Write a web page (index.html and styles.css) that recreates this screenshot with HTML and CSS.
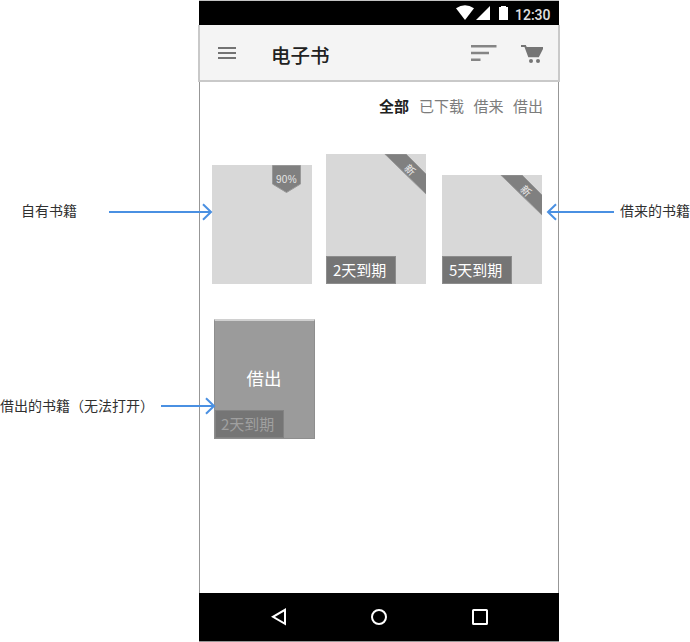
FILE: index.html
```html
<!DOCTYPE html>
<html lang="zh-CN">
<head>
<meta charset="utf-8">
<title>电子书</title>
<link rel="stylesheet" href="styles.css">
</head>
<body>
<main class="stage">
  <section class="phone">
    <div class="status">
      <svg class="signals" width="54" height="16" viewBox="0 0 54 16" fill="#fff">
        <path d="M0 3.2Q9 -2.6 18 3.2L9 15Z"/>
        <path d="M34 1V15H20Z"/>
        <path d="M43 2H45V1H50V2H52V15H43Z"/>
      </svg>
      <span class="clock">12:30</span>
    </div>
    <header class="appbar">
      <svg class="menu" width="18" height="12" viewBox="0 0 18 12" fill="#737373"><path d="M0 0H18V2H0ZM0 5H18V7H0ZM0 10H18V12H0Z"/></svg>
      <h1 class="title">电子书</h1>
      <svg class="sort" width="26" height="17" viewBox="0 0 26 17" fill="#858585"><path d="M0 0H25.5V2.6H0ZM0 6.7H18V9.3H0ZM0 13.4H9.5V16H0Z"/></svg>
      <svg class="cart" width="23" height="19" viewBox="0 0 23 19" fill="#757575"><path d="M0 0H4.8L5.7 2H22V4L17.8 12.2H7.3L3.5 2H0Z"/><circle cx="10" cy="16" r="2"/><circle cx="17" cy="16" r="2"/></svg>
    </header>
    <div class="content">
      <nav class="tabs"><span class="tab active">全部</span><span class="tab">已下载</span><span class="tab">借来</span><span class="tab">借出</span></nav>
      <div class="shelf">
        <article class="book own">
          <svg class="progress" width="29" height="29" viewBox="0 0 29 29"><path d="M.5 .5H28.5V19L14.5 27.5L.5 19Z" fill="#808080" stroke="#989898"/></svg>
          <span class="percent">90%</span>
        </article>
        <article class="book tall">
          <svg class="ribbon" width="43" height="41" viewBox="0 0 43 41"><path d="M.8 0H22L43 21V41Z" fill="#808080" stroke="#989898"/></svg>
          <span class="new">新</span>
          <span class="due">2天到期</span>
        </article>
        <article class="book short">
          <svg class="ribbon" width="43" height="41" viewBox="0 0 43 41"><path d="M.8 0H22L43 21V41Z" fill="#808080" stroke="#989898"/></svg>
          <span class="new">新</span>
          <span class="due">5天到期</span>
        </article>
      </div>
      <article class="lent"><span class="lent-label">借出</span><span class="due faded">2天到期</span></article>
    </div>
    <footer class="navbar">
      <svg width="16" height="18" viewBox="0 0 16 18" fill="none" stroke="#fff" stroke-width="2"><path d="M15 1.8V15.8L3 8.8Z"/></svg>
      <svg width="16" height="16" viewBox="0 0 16 16" fill="none" stroke="#fff" stroke-width="2"><circle cx="8" cy="8" r="7"/></svg>
      <svg width="16" height="16" viewBox="0 0 16 16" fill="none" stroke="#fff" stroke-width="2"><rect x="1" y="1" width="14" height="14" rx=".6"/></svg>
    </footer>
  </section>
  <div class="callout note-own"><span class="note">自有书籍</span><svg width="104" height="18" viewBox="0 0 104 18"><path d="M0 9H102M94 1.2L102 9L94 16.8"/></svg></div>
  <div class="callout note-borrowed"><svg width="69" height="18" viewBox="0 0 69 18"><path d="M68 9H2M10 1.2L2 9L10 16.8"/></svg><span class="note">借来的书籍</span></div>
  <div class="callout note-lent"><span class="note">借出的书籍<span class="paren">（</span>无法打开）</span><svg width="55" height="18" viewBox="0 0 55 18"><path d="M0 9H53M45 1.2L53 9L45 16.8"/></svg></div>
</main>
</body>
</html>
```
FILE: styles.css
```css
* { box-sizing: border-box; }
body {
  margin: 0;
  background: #fff;
  font-family: "Noto Sans CJK SC", sans-serif;
}
svg { display: block; flex: none; }
.stage {
  position: relative;
  width: 690px;
  height: 642px;
  overflow: hidden;
}
.phone {
  display: flex;
  flex-direction: column;
  width: 360px;
  height: 642px;
  margin-left: 199px;
  border-top: 1px solid #c4c4c4;
  border-bottom: 1px solid #979797;
}
.status {
  display: flex;
  justify-content: flex-end;
  height: 24px;
  padding-right: 8px;
  background: #000;
}
.signals { margin: 4px 5px 0 0; }
.clock {
  width: 36px;
  padding-top: 1px;
  color: #e0e0e0;
  font: 500 14px/26px Roboto, sans-serif;
  white-space: nowrap;
}
.appbar {
  display: flex;
  align-items: flex-start;
  flex: none;
  width: 362px;
  height: 57px;
  margin-left: -1px;
  padding: 0 14px 0 18px;
  background: #f4f4f4;
  border: solid #c9c9c9;
  border-width: 0 2px 2px;
}
.menu { margin-top: 22px; }
.title {
  margin: 15px auto 0 35px;
  color: #212121;
  font-size: 19.5px;
  font-weight: 500;
  line-height: 30px;
}
.sort { margin: 20px 24px 0 0; }
.cart { margin-top: 20px; }
.content {
  flex: 1;
  border: solid #979797;
  border-width: 0 1px;
}
.tabs {
  display: flex;
  justify-content: flex-end;
  gap: 9.5px;
  height: 36px;
  padding: 13px 15px 0 0;
  color: #7c7c7c;
  font-size: 15px;
  line-height: 22px;
}
.active { margin-right: .5px; color: #212121; font-weight: 700; }
.shelf {
  display: flex;
  align-items: flex-end;
  height: 166px;
  padding-left: 12px;
}
.book {
  position: relative;
  width: 100px;
  background: #d8d8d8;
  overflow: hidden;
}
.own { height: 119px; margin-right: 14px; }
.tall { height: 130px; margin-right: 16px; }
.short { height: 109px; }
.progress { position: absolute; top: 0; left: 60px; }
.percent {
  position: absolute;
  top: 8px;
  left: 60px;
  width: 29px;
  color: #e6e6e6;
  font: 10px/14px "Liberation Sans", sans-serif;
  letter-spacing: .4px;
  text-align: center;
}
.ribbon { position: absolute; top: 0; right: -1px; }
.new {
  position: absolute;
  top: 9px;
  right: 9px;
  width: 14px;
  color: #eee;
  font-size: 10.5px;
  line-height: 14px;
  text-align: center;
  transform: rotate(45deg);
}
.due {
  position: absolute;
  bottom: 0;
  left: 0;
  width: 70px;
  height: 28px;
  padding-left: 6px;
  background: #757575;
  border: 1px solid #8d8d8d;
  color: #fff;
  font-size: 15px;
  line-height: 26px;
  white-space: nowrap;
}
.lent {
  position: relative;
  width: 101px;
  height: 120px;
  margin: 35px 0 0 14px;
  background: #9b9b9b;
  border: 1px solid #8e8e8e;
  border-top: 2px solid #d0d0d0;
  text-align: center;
}
.lent-label {
  display: block;
  margin: 44px 1px 0 0;
  color: #fff;
  font-size: 17.5px;
  line-height: 26px;
}
.faded {
  width: 69px;
  padding-left: 5px;
  border-color: #838383;
  color: #a0a0a0;
  text-align: left;
}
.navbar {
  display: flex;
  align-items: center;
  flex: none;
  gap: 85px;
  height: 48px;
  padding-left: 71px;
  background: #000;
}
.callout {
  position: absolute;
  display: flex;
  align-items: center;
  height: 22px;
  color: #303030;
  font-size: 14px;
  line-height: 22px;
  white-space: nowrap;
}
.note { padding-bottom: 4px; }
.note-lent .note { width: 154px; padding-bottom: 2px; }
.callout svg { fill: none; stroke: #4a90e2; stroke-width: 2; }
.note-own { top: 201px; left: 21px; gap: 32px; }
.note-borrowed { top: 201px; left: 546px; gap: 5px; }
.note-lent { top: 395px; left: 0; gap: 7px; }
```
